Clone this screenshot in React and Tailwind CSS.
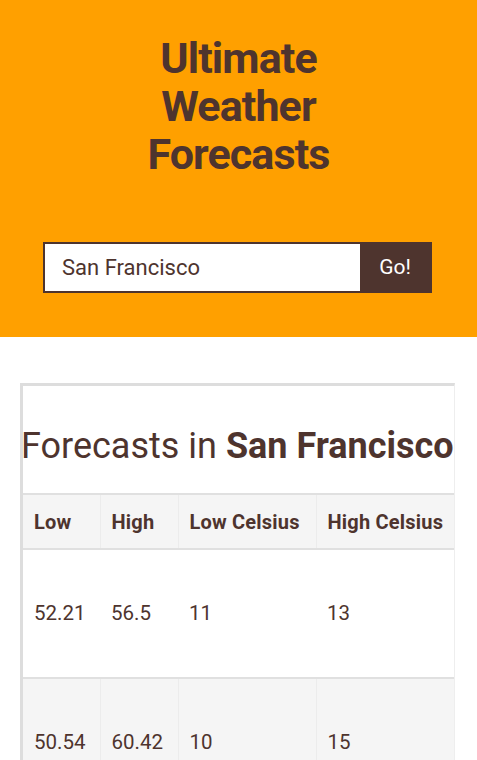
import { useState } from 'react'

// Weather search landing: orange hero with search, then forecast table card.
const rows = [
  { low: '52.21', high: '56.5', lowC: '11', highC: '13' },
  { low: '50.54', high: '60.42', lowC: '10', highC: '15' },
]

export default function App() {
  const [city, setCity] = useState('San Francisco')

  return (
    <div className="min-h-screen bg-white text-[#4e342e]" style={{ fontFamily: 'Roboto, "Liberation Sans", sans-serif' }}>
      <header className="bg-[#ffa000] pt-[34px] pb-[44px]">
        <h1 className="mx-auto w-[220px] text-center text-[43px] font-bold leading-[48px] tracking-[-0.9px]">
          Ultimate Weather Forecasts
        </h1>
        <form className="ml-[43px] mr-[45px] mt-[64px] flex h-[51px] border-2 border-[#4e342e]" onSubmit={(e) => e.preventDefault()}>
          <input
            value={city}
            onChange={(e) => setCity(e.target.value)}
            className="min-w-0 flex-1 bg-white px-[17px] text-[22px] text-[#4e342e] outline-none"
          />
          <button className="w-[70px] bg-[#4e342e] text-[21px] text-white">Go!</button>
        </form>
      </header>

      <main className="px-[20px] pt-[46px]">
        <div className="w-[435px] overflow-hidden border-t-[3px] border-l-[3px] border-r border-[#dddddd] border-r-[#eeeeee] bg-white">
          <h2 className="-ml-[2px] whitespace-nowrap pt-[39px] pb-[25px] text-[36px] font-normal leading-[43px]">
            Forecasts in <span className="font-bold">San Francisco</span>
          </h2>
          <table className="w-[480px] table-fixed border-collapse text-left">
            <colgroup>
              <col className="w-[77px]" />
              <col className="w-[78px]" />
              <col className="w-[138px]" />
              <col className="w-[187px]" />
            </colgroup>
            <thead>
              <tr className="h-[55px] border-y-2 border-[#e0e0e0] bg-[#f5f5f5]">
                {['Low', 'High', 'Low Celsius', 'High Celsius'].map((h) => (
                  <th key={h} className="border-x border-[#ececec] px-[11px] text-[20px] font-bold tracking-[0.2px] whitespace-nowrap first:border-l-0">
                    {h}
                  </th>
                ))}
              </tr>
            </thead>
            <tbody>
              {rows.map((r, i) => (
                <tr key={i} className={`h-[129px] border-b-2 border-[#e0e0e0] ${i % 2 ? 'bg-[#f5f5f5]' : 'bg-white'}`}>
                  {[r.low, r.high, r.lowC, r.highC].map((v, j) => (
                    <td
                      key={j}
                      className={`px-[11px] text-[20.5px] ${i % 2 ? 'border-x border-[#ececec]' : ''} first:border-l-0`}
                    >
                      {v}
                    </td>
                  ))}
                </tr>
              ))}
            </tbody>
          </table>
        </div>
      </main>
    </div>
  )
}
